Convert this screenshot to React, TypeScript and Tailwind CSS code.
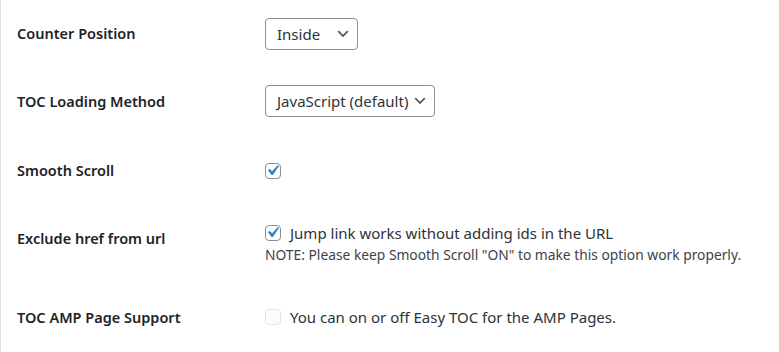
import React from "react";

const font = { fontFamily: '"Noto Sans", "Open Sans", sans-serif' };

function Chevron() {
  return (
    <svg width="16" height="16" viewBox="0 0 20 20" className="shrink-0">
      <path d="M5 6l5 5 5-5 2 1-7 7-7-7 2-1z" fill="#555" />
    </svg>
  );
}

function Select({ value, width }: { value: string; width: string }) {
  return (
    <div
      className={`flex items-center justify-between h-[32px] border border-[#8c8f94] rounded-[4px] bg-white pl-[11px] pr-[6px] text-[15px] text-[#2c3338] ${width}`}
    >
      <span className="leading-none">{value}</span>
      <Chevron />
    </div>
  );
}

function Checkbox({ checked, disabled }: { checked?: boolean; disabled?: boolean }) {
  return (
    <div
      className={`relative w-[16px] h-[16px] rounded-[4px] border shrink-0 ${
        disabled ? "border-[#e2e4e7] bg-[#fcfcfc]" : "border-[#8c8f94] bg-white"
      }`}
    >
      {checked && (
        <svg
          width="21"
          height="21"
          viewBox="0 0 20 20"
          className="absolute left-[-4px] top-[-4px]"
        >
          <path d="M14.83 4.89l1.34.94-5.81 8.38H9.02L5.78 9.67l1.34-1.25 2.57 2.4z" fill="#3582c4" />
        </svg>
      )}
    </div>
  );
}

function Label({ children, pt }: { children: React.ReactNode; pt: string }) {
  return (
    <div className={`w-[248px] shrink-0 text-[14.5px] leading-[20px] font-semibold text-[#1d2327] ${pt}`}>
      {children}
    </div>
  );
}

export default function App() {
  return (
    <div className="w-[779px] h-[352px] bg-white border-l border-[#e0e0e0] overflow-hidden" style={font}>
      <div className="pl-[16px] flex flex-col">
        <div className="flex h-[68px]">
          <Label pt="pt-[23px]">Counter Position</Label>
          <div className="pt-[18px]">
            <Select value="Inside" width="w-[93px]" />
          </div>
        </div>
        <div className="flex h-[68px]">
          <Label pt="pt-[23px]">TOC Loading Method</Label>
          <div className="pt-[17px]">
            <Select value="JavaScript (default)" width="w-[170px]" />
          </div>
        </div>
        <div className="flex h-[68px]">
          <Label pt="pt-[24px]">Smooth Scroll</Label>
          <div className="pt-[27px]">
            <Checkbox checked />
          </div>
        </div>
        <div className="flex h-[80px]">
          <Label pt="pt-[24px]">Exclude href from url</Label>
          <div className="pt-[18px] flex flex-col">
            <div className="flex items-center gap-[9px] h-[22px] text-[15px] text-[#2c3338]">
              <Checkbox checked />
              <span>Jump link works without adding ids in the URL</span>
            </div>
            <div className="mt-[1px] text-[13.8px] leading-[20px] text-[#3c434a]">
              NOTE: Please keep Smooth Scroll "ON" to make this option work properly.
            </div>
          </div>
        </div>
        <div className="flex h-[68px]">
          <Label pt="pt-[23px]">TOC AMP Page Support</Label>
          <div className="pt-[22px]">
            <div className="flex items-center gap-[9px] h-[22px] text-[15px] text-[#2c3338]">
              <Checkbox disabled />
              <span>You can on or off Easy TOC for the AMP Pages.</span>
            </div>
          </div>
        </div>
      </div>
    </div>
  );
}
